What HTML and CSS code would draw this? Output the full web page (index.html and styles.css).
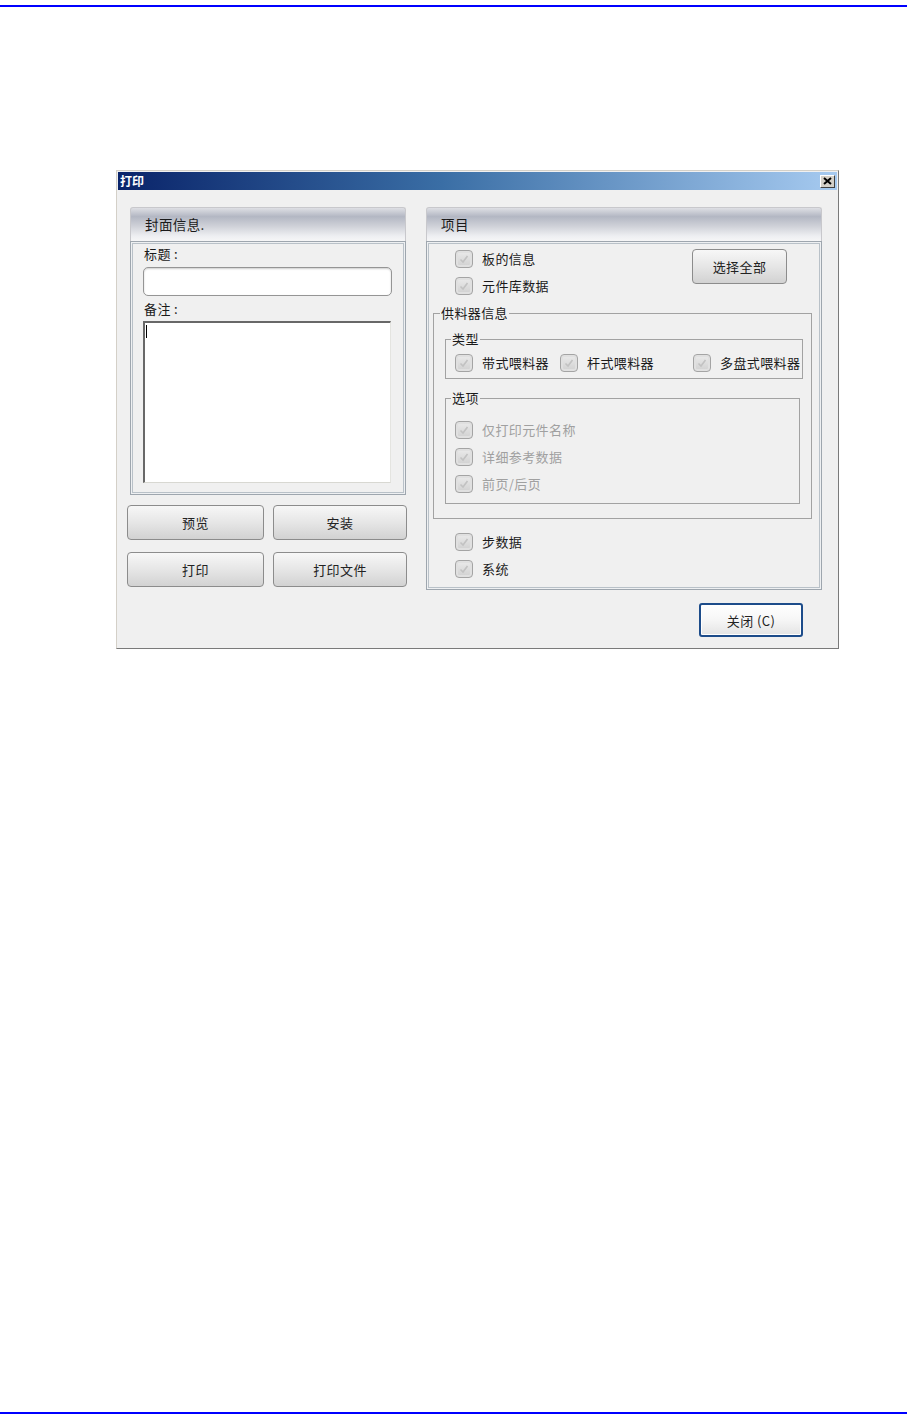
FILE: index.html
```html
<!DOCTYPE html>
<html lang="zh-CN">
<head>
<meta charset="utf-8">
<title>打印</title>
<link rel="stylesheet" href="styles.css">
</head>
<body>
<div class="rule rule-top"></div>
<div class="dialog">
  <div class="titlebar">
    <span class="title">打印</span>
    <span class="close-x"><svg width="9" height="8" viewBox="0 0 9 8"><path d="M1 1 L8 7 M8 1 L1 7" stroke="#000" stroke-width="2" fill="none"/></svg></span>
  </div>
  <div class="dialog-body">
    <div class="col-left">
      <section class="panel">
        <div class="panel-head">封面信息.</div>
        <div class="panel-body cover-body">
          <div class="field-label">标题 :</div>
          <div class="text-input"></div>
          <div class="field-label">备注 :</div>
          <div class="text-area"><span class="caret"></span></div>
        </div>
      </section>
      <div class="btn-grid">
        <button class="btn">预览</button>
        <button class="btn">安装</button>
        <button class="btn">打印</button>
        <button class="btn">打印文件</button>
      </div>
    </div>
    <div class="col-right">
      <section class="panel">
        <div class="panel-head">项目</div>
        <div class="panel-body items-body">
          <div class="items-top">
            <div class="check-list">
              <div class="check"><span class="box"><svg width="12" height="12" viewBox="0 0 12 12"><path d="M2.5 6.5 L5 9 L9.5 3" stroke="#c2c2c2" stroke-width="1.6" fill="none"/></svg></span><span>板的信息</span></div>
              <div class="check"><span class="box"><svg width="12" height="12" viewBox="0 0 12 12"><path d="M2.5 6.5 L5 9 L9.5 3" stroke="#c2c2c2" stroke-width="1.6" fill="none"/></svg></span><span>元件库数据</span></div>
            </div>
            <button class="btn btn-select">选择全部</button>
          </div>
          <fieldset class="group group-feeder">
            <legend>供料器信息</legend>
            <fieldset class="group group-type">
              <legend>类型</legend>
              <div class="type-row">
                <div class="check type-1"><span class="box"><svg width="12" height="12" viewBox="0 0 12 12"><path d="M2.5 6.5 L5 9 L9.5 3" stroke="#c2c2c2" stroke-width="1.6" fill="none"/></svg></span><span>带式喂料器</span></div>
                <div class="check type-2"><span class="box"><svg width="12" height="12" viewBox="0 0 12 12"><path d="M2.5 6.5 L5 9 L9.5 3" stroke="#c2c2c2" stroke-width="1.6" fill="none"/></svg></span><span>杆式喂料器</span></div>
                <div class="check type-3"><span class="box"><svg width="12" height="12" viewBox="0 0 12 12"><path d="M2.5 6.5 L5 9 L9.5 3" stroke="#c2c2c2" stroke-width="1.6" fill="none"/></svg></span><span>多盘式喂料器</span></div>
              </div>
            </fieldset>
            <fieldset class="group group-opts">
              <legend>选项</legend>
              <div class="check disabled"><span class="box"><svg width="12" height="12" viewBox="0 0 12 12"><path d="M2.5 6.5 L5 9 L9.5 3" stroke="#c2c2c2" stroke-width="1.6" fill="none"/></svg></span><span>仅打印元件名称</span></div>
              <div class="check disabled"><span class="box"><svg width="12" height="12" viewBox="0 0 12 12"><path d="M2.5 6.5 L5 9 L9.5 3" stroke="#c2c2c2" stroke-width="1.6" fill="none"/></svg></span><span>详细参考数据</span></div>
              <div class="check disabled"><span class="box"><svg width="12" height="12" viewBox="0 0 12 12"><path d="M2.5 6.5 L5 9 L9.5 3" stroke="#c2c2c2" stroke-width="1.6" fill="none"/></svg></span><span>前页/后页</span></div>
            </fieldset>
          </fieldset>
          <div class="check-list bottom-list">
            <div class="check"><span class="box"><svg width="12" height="12" viewBox="0 0 12 12"><path d="M2.5 6.5 L5 9 L9.5 3" stroke="#c2c2c2" stroke-width="1.6" fill="none"/></svg></span><span>步数据</span></div>
            <div class="check"><span class="box"><svg width="12" height="12" viewBox="0 0 12 12"><path d="M2.5 6.5 L5 9 L9.5 3" stroke="#c2c2c2" stroke-width="1.6" fill="none"/></svg></span><span>系统</span></div>
          </div>
        </div>
      </section>
      <div class="close-row"><button class="btn btn-close">关闭 (C)</button></div>
    </div>
  </div>
</div>
<div class="rule rule-bottom"></div>
</body>
</html>
```
FILE: styles.css
```css
* { box-sizing: border-box; }
html, body { margin: 0; padding: 0; }
body {
  background: #fff;
  width: 907px;
  height: 1424px;
  display: flex;
  flex-direction: column;
  overflow: hidden;
  font-family: "Noto Sans CJK SC", "Liberation Sans", sans-serif;
  font-size: 13px;
  letter-spacing: 0.4px;
  color: #1a1a1a;
}
.rule { flex: none; height: 2px; background: #0000ff; }
.rule-top { margin-top: 5px; }
.rule-bottom { margin-top: auto; margin-bottom: 10px; }

.dialog {
  flex: none;
  margin: 163px 0 0 116px;
  width: 723px;
  height: 479px;
  padding: 1px;
  border: 1px solid;
  border-color: #d4d0c8 #7a7a7a #7a7a7a #d4d0c8;
  background: #f0f0f0;
  display: flex;
  flex-direction: column;
}
.titlebar {
  flex: none;
  height: 18px;
  display: flex;
  align-items: center;
  justify-content: space-between;
  padding: 0 1px 0 2px;
  background: linear-gradient(to right, #0a246a 0%, #3a6ea5 45%, #a6caf0 100%);
}
.title { color: #fff; font-weight: bold; font-size: 12px; line-height: 18px; letter-spacing: 0; }
.close-x {
  width: 15px;
  height: 13px;
  margin-right: 1px;
  display: flex;
  align-items: center;
  justify-content: center;
  background: #d4d0c8;
  border: 1px solid;
  border-color: #fff #404040 #404040 #fff;
}

.dialog-body { flex: 1; display: flex; padding: 17px 15px 0 9px; }
.col-left { width: 280px; flex: none; }
.col-right { width: 396px; flex: none; margin-left: 19px; }
.col-left .panel { margin: 0 1px 0 3px; }

.panel-head {
  height: 34px;
  line-height: 32px;
  padding-left: 14px;
  font-size: 13.5px;
  border: 1px solid #c8c8cc;
  border-bottom: none;
  border-radius: 3px 3px 0 0;
  background: linear-gradient(to bottom, #dedfe4 0%, #b3b7c3 26%, #cfd1d8 55%, #eeeff2 85%, #f6f6f7 100%);
}
.panel-body {
  border: 1px solid #9ea6ae;
  box-shadow: inset 0 0 0 1px #eef0f2, inset 0 0 0 2px #b9c1c8;
}
.cover-body { height: 254px; padding: 3px 13px 0 12px; }
.field-label { line-height: 18px; height: 18px; padding-left: 1px; }
.text-input {
  margin: 4px 0 4px 0;
  width: 249px;
  height: 29px;
  background: #fff;
  border: 1px solid #959595;
  border-radius: 5px;
  box-shadow: inset 0 1px 2px rgba(0,0,0,0.2);
}
.text-area {
  margin-top: 3px;
  width: 248px;
  height: 162px;
  background: #fff;
  border-top: 2px solid #686868;
  border-left: 2px solid #686868;
  border-right: 1px solid #e4e4e0;
  border-bottom: 1px solid #d8d8d2;
  padding: 2px 0 0 1px;
}
.caret { display: block; width: 1px; height: 13px; background: #000; }

.btn {
  font-family: inherit;
  font-size: 13px;
  letter-spacing: 0.4px;
  color: #222;
  border: 1px solid #8c8c8c;
  border-radius: 4px;
  background: linear-gradient(to bottom, #f7f7f7 0%, #e6e6e6 50%, #d2d2d2 100%);
  padding: 0;
  margin: 0;
}
.btn-grid {
  margin-top: 10px;
  display: grid;
  grid-template-columns: 137px 134px;
  grid-auto-rows: 35px;
  column-gap: 9px;
  row-gap: 12px;
}

.items-body { height: 349px; }
.items-top { height: 62px; display: flex; align-items: flex-start; }
.check-list { padding: 3px 0 0 28px; }
.btn-select { width: 95px; height: 35px; margin: 7px 34px 0 auto; }

.check { display: flex; align-items: center; height: 27px; white-space: nowrap; }
.box {
  flex: none;
  width: 18px;
  height: 18px;
  margin-right: 9px;
  border: 1px solid #a4a4a4;
  border-radius: 4px;
  background: linear-gradient(to bottom, #ebebeb, #d0d0d0);
  box-shadow: inset 0 0 0 2px #e0e0e0;
  display: flex;
  align-items: center;
  justify-content: center;
}
.disabled { color: #a0a0a0; }

.group {
  margin: 0;
  padding: 0;
  min-width: 0;
  border: 1px solid #a2a2a2;
}
.group legend { line-height: 18px; padding: 0 1px; font-size: 13px; }
.group-feeder { margin: 0 9px 0 6px; padding-bottom: 14px; }
.group-feeder > legend { margin-left: 6px; }
.group-type { margin: 8px 8px 0 11px; }
.group-type > legend { margin-left: 5px; }
.type-row { display: flex; height: 30px; padding-left: 9px; }
.type-1 { width: 105px; height: 29px; }
.type-2 { width: 133px; height: 29px; }
.type-3 { height: 29px; }
.group-opts { margin: 10px 11px 0 11px; padding: 9px 0 6px 0; }
.group-opts > legend { margin-left: 5px; }
.group-opts > .check { margin-left: 9px; }
.bottom-list { padding-top: 9px; }

.close-row { display: flex; justify-content: flex-end; margin-top: 13px; padding-right: 19px; }
.btn-close {
  width: 104px;
  height: 34px;
  border: 2px solid #1d4c8a;
  border-radius: 3px;
  background: linear-gradient(to bottom, #ffffff 0%, #f6f6f6 50%, #e4e4e4 100%);
  box-shadow: inset 0 0 0 1px #ffffff;
}
```
